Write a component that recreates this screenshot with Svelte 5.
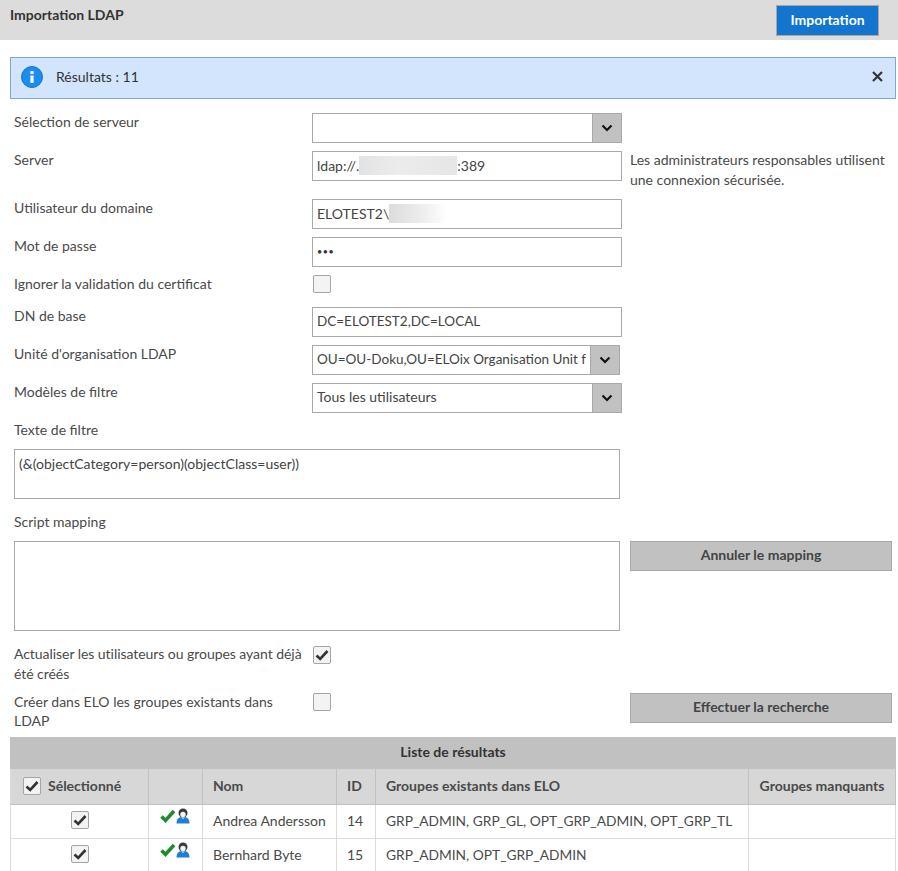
<script lang="ts">
  const rows = [
    { name: "Andrea Andersson", id: 14, groups: "GRP_ADMIN, GRP_GL, OPT_GRP_ADMIN, OPT_GRP_TL" },
    { name: "Bernhard Byte", id: 15, groups: "GRP_ADMIN, OPT_GRP_ADMIN" },
  ];
</script>

{#snippet chevron()}
  <span class="arrow">
    <svg width="12" height="8" viewBox="0 0 12 8"><path d="M1.5 1.5 6 6l4.500-4.500" fill="none" stroke="#111" stroke-width="2.2" /></svg>
  </span>
{/snippet}

{#snippet check(on: boolean)}
  <span class="check">
    {#if on}
      <svg width="14" height="12" viewBox="0 0 14 12"><path d="M1.5 6.500 5.200 10 12.500 2" fill="none" stroke="#333" stroke-width="2.6" /></svg>
    {/if}
  </span>
{/snippet}

<header class="top">
  <h1>Importation LDAP</h1>
  <button class="primary">Importation</button>
</header>

<div class="alert">
  <svg class="info" width="22" height="22" viewBox="0 0 22 22">
    <circle cx="11" cy="11" r="10.500" fill="#1c8cf0" stroke="#1a6fc0" />
    <rect x="9.400" y="9.500" width="3.200" height="7.500" fill="#fff" />
    <rect x="9.400" y="5" width="3.200" height="3" fill="#fff" />
  </svg>
  <span class="alert-text">Résultats : 11</span>
  <svg class="close" width="11" height="11" viewBox="0 0 11 11"><path d="M1 1l9 9M10 1l-9 9" stroke="#333" stroke-width="2.200" /></svg>
</div>

<form class="form">
  <div class="row s30">
    <span class="label">Sélection de serveur</span>
    <div class="box select">{@render chevron()}</div>
  </div>
  <div class="row s30 top8">
    <span class="label">Server</span>
    <div class="box server"><span>ldap://.</span><span class="blur b1"></span><span>:389</span></div>
    <p class="hint">Les administrateurs responsables utilisent une connexion sécurisée.</p>
  </div>
  <div class="row s30 top18">
    <span class="label">Utilisateur du domaine</span>
    <div class="box small"><span>ELOTEST2\</span><span class="blur b2"></span></div>
  </div>
  <div class="row s30 top8">
    <span class="label">Mot de passe</span>
    <div class="box dots">•••</div>
  </div>
  <div class="row top8 r-check">
    <span class="label">Ignorer la validation du certificat</span>
    {@render check(false)}
  </div>
  <div class="row s30 top12">
    <span class="label">DN de base</span>
    <div class="box tight">DC=ELOTEST2,DC=LOCAL</div>
  </div>
  <div class="row s30 top8">
    <span class="label">Unité d'organisation LDAP</span>
    <div class="box select tight narrow"><span class="clip">OU=OU-Doku,OU=ELOix Organisation Unit f</span>{@render chevron()}</div>
  </div>
  <div class="row s30 top8">
    <span class="label">Modèles de filtre</span>
    <div class="box select small"><span class="clip">Tous les utilisateurs</span>{@render chevron()}</div>
  </div>

  <div class="label block t-filter">Texte de filtre</div>
  <div class="area a50">(&amp;(objectCategory=person)(objectClass=user))</div>

  <div class="label block t-script">Script mapping</div>
  <div class="with-side">
    <div class="area a90"></div>
    <button type="button" class="grey">Annuler le mapping</button>
  </div>

  <div class="row tall t-update">
    <span class="label">Actualiser les utilisateurs ou groupes ayant déjà été créés</span>
    {@render check(true)}
  </div>
  <div class="row tall t-create">
    <span class="label wrap">Créer dans ELO les groupes existants dans LDAP</span>
    {@render check(false)}
    <button type="button" class="grey">Effectuer la recherche</button>
  </div>
</form>

<table>
  <colgroup>
    <col style="width:139px" /><col style="width:54px" /><col style="width:134px" /><col style="width:39px" /><col style="width:373px" /><col style="width:147px" />
  </colgroup>
  <thead>
    <tr class="title"><th colspan="6">Liste de résultats</th></tr>
    <tr class="heads">
      <th class="sel"><span class="sel-in">{@render check(true)}<span>Sélectionné</span></span></th>
      <th></th>
      <th class="l">Nom</th>
      <th class="l">ID</th>
      <th class="l">Groupes existants dans ELO</th>
      <th>Groupes manquants</th>
    </tr>
  </thead>
  <tbody>
    {#each rows as row (row.id)}
      <tr>
        <td class="c">{@render check(true)}</td>
        <td class="icons">
          <svg width="30" height="16" viewBox="0 0 30 16">
            <path d="M1.500 8.500 5.500 12.500 14 3" fill="none" stroke="#1f8a2e" stroke-width="3.600" />
            <path d="M16.500 15.500c0-4 1.500-6 4.500-6.500l2 2 2-2c3 .5 4.500 2.500 4.500 6.500z" fill="#1e7fd6" />
            <circle cx="23" cy="5" r="4.500" fill="#3a3a3a" />
            <ellipse cx="23" cy="6.500" rx="2.700" ry="2.800" fill="#f4f4f4" />
          </svg>
        </td>
        <td>{row.name}</td>
        <td>{row.id}</td>
        <td class="groups">{row.groups}</td>
        <td></td>
      </tr>
    {/each}
  </tbody>
</table>

<style>
  :global(body) {
    margin: 0;
    background: #fff;
    color: #4a4a4a;
    font-family: "Lato", "Open Sans", sans-serif;
    font-size: 14px;
  }
  .top {
    height: 40px;
    box-sizing: border-box;
    background: #dcdcdc;
    display: flex;
    justify-content: space-between;
    padding: 5px 19px 0 10px;
  }
  h1 {
    margin: 1px 0 0;
    font-size: 14px;
    font-weight: 700;
    color: #333;
  }
  .primary {
    width: 103px;
    height: 31px;
    padding: 0 0 2px;
    background: #1475cf;
    border: 1px solid #a6a6a6;
    color: #fff;
    font: 700 14px "Lato", sans-serif;
  }
  .alert {
    margin: 17px 2px 0 10px;
    height: 42px;
    box-sizing: border-box;
    background: #d3e5fd;
    border: 1px solid #7da6da;
    display: flex;
    align-items: center;
    padding: 0 12px 3px 10px;
  }
  .alert-text {
    margin-left: 13px;
    color: #333;
  }
  .close {
    margin-left: auto;
  }
  .form {
    padding: 14px 6px 0 14px;
  }
  .row {
    display: grid;
    grid-template-columns: 298px 310px 1fr;
  }
  .s30 {
    min-height: 30px;
  }
  .top8 {
    margin-top: 8px;
  }
  .top12 {
    margin-top: 12px;
  }
  .top18 {
    margin-top: 18px;
  }
  .label {
    font-size: 14px;
    line-height: 20px;
    margin-top: -1px;
  }
  .box {
    height: 30px;
    box-sizing: border-box;
    border: 1px solid #a9a9a9;
    background: #fff;
    display: flex;
    align-items: center;
    padding: 0 0 2px 4px;
    font-size: 15px;
    white-space: nowrap;
    color: #444;
  }
  .server {
    font-size: 14px;
  }
  .small {
    font-size: 14px;
  }
  .tight {
    font-size: 13.500px;
  }
  .dots {
    font-size: 9px;
    letter-spacing: 0.500px;
    color: #333;
  }
  .select {
    padding-bottom: 0;
  }
  .clip {
    flex: 1;
    overflow: hidden;
    padding-bottom: 3px;
  }
  .arrow {
    margin-left: auto;
    flex: none;
    width: 28px;
    align-self: stretch;
    background: #c1c1c1;
    border-left: 1px solid #a9a9a9;
    display: flex;
    align-items: center;
    justify-content: center;
  }
  .narrow {
    width: 308px;
    gap: 4px;
  }
  .blur {
    display: inline-block;
    height: 19px;
    background: linear-gradient(90deg, #e3e3e3, #ececec 40%, #e6e6e6);
  }
  .b1 {
    width: 98px;
  }
  .b2 {
    width: 58px;
    background: linear-gradient(90deg, #dcdcdc, #eee 60%, #fff);
  }
  .hint {
    margin: -1px 0 0 8px;
    font-size: 14px;
    line-height: 20px;
    height: 30px;
  }
  .check {
    width: 16px;
    height: 16px;
    display: inline-flex;
    align-items: center;
    justify-content: center;
    border: 1px solid #a5a5a5;
    border-radius: 2px;
    background: #f3f3f3;
    margin-left: 1px;
    justify-self: start;
  }
  .r-check {
    height: 20px;
  }
  .block {
    display: block;
  }
  .t-filter {
    margin-top: 7px;
    height: 29px;
  }
  .area {
    box-sizing: border-box;
    width: 606px;
    border: 1px solid #a9a9a9;
    padding: 5px 4px;
    font-size: 14px;
    line-height: 18px;
    color: #444;
  }
  .a50 {
    height: 50px;
  }
  .a90 {
    height: 90px;
  }
  .t-script {
    margin-top: 13px;
    height: 29px;
  }
  .with-side {
    display: flex;
    gap: 10px;
    align-items: flex-start;
  }
  .grey {
    width: 262px;
    height: 30px;
    padding: 0 0 4px;
    background: #c1c1c1;
    border: 1px solid #a9a9a9;
    color: #444;
    font: 700 14px "Lato", sans-serif;
  }
  .tall {
    height: 40px;
  }
  .tall .label {
    margin-top: -1px;
  }
  .tall .check {
    margin-top: 1px;
  }
  .wrap {
    padding-right: 8px;
  }
  .t-update {
    margin-top: 14px;
    letter-spacing: -0.050px;
  }
  .t-create {
    margin-top: 7px;
    grid-template-columns: 298px 318px 1fr;
  }
  .t-create .label {
    margin-top: 0;
    line-height: 19px;
  }
  .t-create .grey {
    margin-top: 1px;
  }
  table {
    margin: 5px 2px 0 10px;
    width: 886px;
    border-collapse: separate;
    border-spacing: 0;
    table-layout: fixed;
  }
  .title th {
    height: 32px;
    box-sizing: border-box;
    padding: 0 0 3px;
    background: #c1c1c1;
    color: #333;
    font-weight: 700;
  }
  .heads th {
    height: 36px;
    box-sizing: border-box;
    padding: 0 0 2px;
    background: #d7d7d7;
    border-right: 1px solid #c1c1c1;
    border-bottom: 1px solid #c1c1c1;
    font-weight: 700;
    color: #4a4a4a;
  }
  .heads th.l {
    text-align: left;
    padding-left: 10px;
  }
  .sel-in {
    display: flex;
    align-items: center;
    gap: 7px;
    padding-left: 11px;
  }
  td {
    height: 34px;
    box-sizing: border-box;
    padding: 0 0 3px 10px;
    border-right: 1px solid #dcdcdc;
    border-bottom: 1px solid #dcdcdc;
    white-space: nowrap;
  }
  td:first-child,
  .heads th:first-child {
    border-left: 1px solid #dcdcdc;
  }
  td.groups {
    font-size: 13.750px;
  }
  td.c {
    text-align: center;
    padding: 0;
  }
  td.c .check {
    margin: 0;
    vertical-align: middle;
    position: relative;
    top: -2px;
  }
  td.icons {
    vertical-align: top;
    padding: 3px 0 0 11px;
  }
</style>
